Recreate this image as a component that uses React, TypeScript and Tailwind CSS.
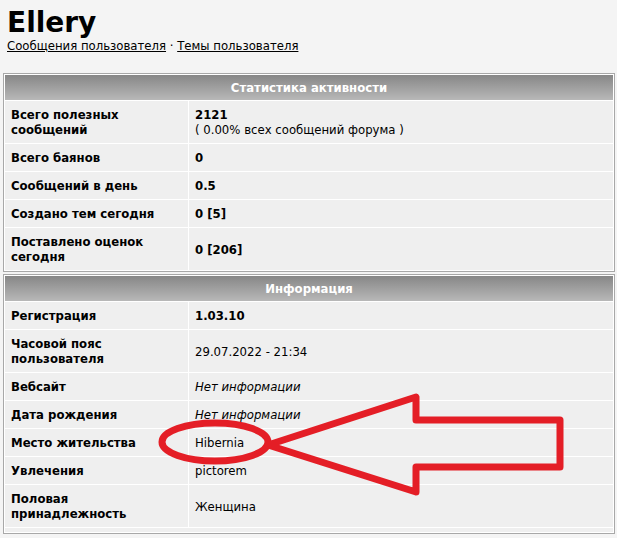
import React from "react";

type Row = { label: React.ReactNode; value: React.ReactNode };

const titleFont = { fontFamily: '"DejaVu Sans", Verdana, sans-serif' };
const bodyFont = { fontFamily: '"DejaVu Sans Condensed", "DejaVu Sans", Tahoma, sans-serif' };

function Section({ title, rows, footer }: { title: string; rows: Row[]; footer?: boolean }) {
  return (
    <table
      className="ml-[3px] w-[612px] table-fixed border-separate border-spacing-[1px] border border-[#a8a8a8] bg-white text-[13px] leading-[15px] text-black font-stretch-condensed"
      style={bodyFont}
    >
      <colgroup>
        <col className="w-[183px]" />
        <col />
      </colgroup>
      <tbody>
        <tr>
          <td
            colSpan={2}
            className="h-[25px] bg-gradient-to-b from-[#878787] to-[#b8b8b8] p-0 text-center align-middle font-bold text-white"
          >
            {title}
          </td>
        </tr>
        {rows.map((r, i) => (
          <tr key={i}>
            <td className="bg-[#efefef] px-[6px] py-[6px] align-middle font-bold">{r.label}</td>
            <td className="bg-[#efefef] px-[6px] py-[6px] align-middle">{r.value}</td>
          </tr>
        ))}
        {footer && (
          <tr>
            <td colSpan={2} className="h-[4px] bg-[#efefef] p-0"></td>
          </tr>
        )}
      </tbody>
    </table>
  );
}

export default function App() {
  const stats: Row[] = [
    {
      label: (
        <>
          Всего полезных
          <br />
          сообщений
        </>
      ),
      value: (
        <>
          <b>2121</b>
          <br />( 0.00% всех сообщений форума )
        </>
      ),
    },
    { label: "Всего баянов", value: <b>0</b> },
    { label: "Сообщений в день", value: <b>0.5</b> },
    { label: "Создано тем сегодня", value: <b>0 [5]</b> },
    {
      label: (
        <>
          Поставлено оценок
          <br />
          сегодня
        </>
      ),
      value: <b>0 [206]</b>,
    },
  ];
  const info: Row[] = [
    { label: "Регистрация", value: <b>1.03.10</b> },
    {
      label: (
        <>
          Часовой пояс
          <br />
          пользователя
        </>
      ),
      value: "29.07.2022 - 21:34",
    },
    { label: "Вебсайт", value: <i>Нет информации</i> },
    { label: "Дата рождения", value: <i>Нет информации</i> },
    { label: "Место жительства", value: "Hibernia" },
    { label: "Увлечения", value: "pictorem" },
    {
      label: (
        <>
          Половая
          <br />
          принадлежность
        </>
      ),
      value: "Женщина",
    },
  ];
  return (
    <div className="relative min-h-[538px] w-[617px] overflow-hidden bg-[#f4f4f4] text-black" style={titleFont}>
      <div className="pl-[7px] pt-[8px]">
        <div className="text-[28px] font-bold leading-[30px]">Ellery</div>
        <div className="text-[13px] leading-[15px] font-stretch-condensed" style={bodyFont}>
          <a className="underline">Сообщения пользователя</a> · <a className="underline">Темы пользователя</a>
        </div>
      </div>
      <div className="mt-[20px] flex flex-col gap-[2px]">
        <Section title="Статистика активности" rows={stats} />
        <Section title="Информация" rows={info} footer />
      </div>
      <svg className="pointer-events-none absolute left-0 top-0" width="617" height="538" viewBox="0 0 617 538">
        <ellipse cx="215" cy="442" rx="53" ry="19" fill="none" stroke="#e41e26" strokeWidth="7" />
        <polygon
          points="268,445 416,397 416,420 560,420 560,467 416,467 416,492"
          fill="none"
          stroke="#e41e26"
          strokeWidth="7"
          strokeLinejoin="round"
        />
      </svg>
    </div>
  );
}
